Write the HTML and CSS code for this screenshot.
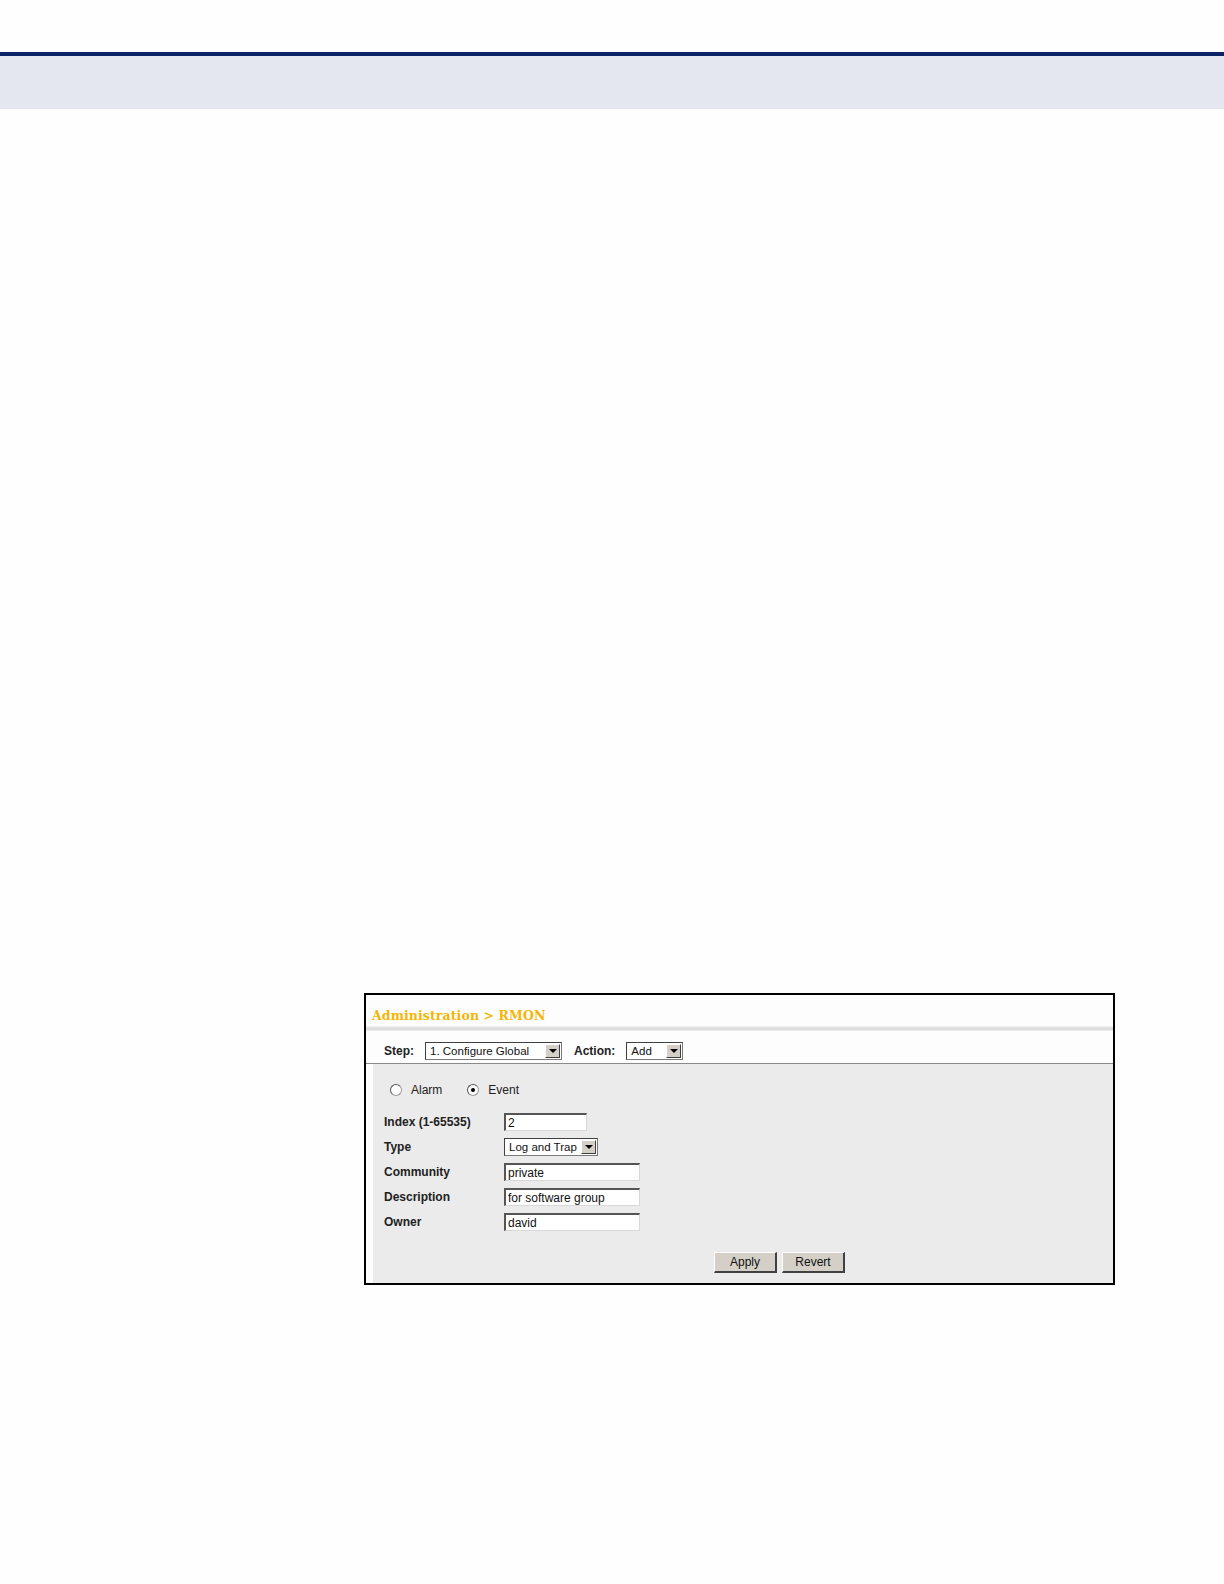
FILE: index.html
```html
<!DOCTYPE html>
<html>
<head>
<meta charset="utf-8">
<link rel="stylesheet" href="styles.css">
</head>
<body>
<div class="topbar"></div>
<div class="band"></div>
<div class="page">
  <div class="frame">
    <div class="title">Administration &gt; RMON</div>
    <div class="shade"></div>
    <div class="steprow">
      <span class="lbl">Step:</span>
      <div class="sel step-sel"><span class="val">1. Configure Global</span><span class="arrow"></span></div>
      <span class="lbl action">Action:</span>
      <div class="sel action-sel"><span class="val">Add</span><span class="arrow"></span></div>
    </div>
    <div class="content">
      <div class="radios">
        <span class="radio"></span><span class="rlabel">Alarm</span>
        <span class="radio on"></span><span class="rlabel">Event</span>
      </div>
      <div class="form">
        <div class="row"><span class="flabel">Index (1-65535)</span><div class="inp w83">2</div></div>
        <div class="row"><span class="flabel">Type</span><div class="sel type-sel"><span class="val">Log and Trap</span><span class="arrow"></span></div></div>
        <div class="row"><span class="flabel">Community</span><div class="inp w136">private</div></div>
        <div class="row"><span class="flabel">Description</span><div class="inp w136">for software group</div></div>
        <div class="row"><span class="flabel">Owner</span><div class="inp w136">david</div></div>
      </div>
      <div class="buttons">
        <div class="btn">Apply</div>
        <div class="btn">Revert</div>
      </div>
    </div>
  </div>
</div>
</body>
</html>
```
FILE: styles.css
```css
html, body {
  margin: 0;
  padding: 0;
  background: #fefefe;
  font-family: "Liberation Sans", Arial, sans-serif;
}
.topbar {
  margin-top: 52px;
  height: 4px;
  background: #0c2466;
}
.band {
  height: 53px;
  background: #e4e7ef;
}
.page {
  padding-top: 884px;
  padding-left: 364px;
}
.frame {
  width: 747px;
  height: 288px;
  border: 2px solid #000;
  background: #fdfdfd;
  display: flex;
  flex-direction: column;
}
.title {
  height: 31px;
  flex: none;
  padding-left: 6px;
  padding-top: 9px;
  box-sizing: border-box;
  display: flex;
  align-items: center;
  font-family: "DejaVu Serif", "Liberation Serif", serif;
  font-weight: bold;
  font-size: 12.5px;
  color: #f3b605;
  letter-spacing: 0.1px;
}
.shade {
  height: 5px;
  flex: none;
  background: linear-gradient(#f2f2f2, #d9d9d9 60%, #efefef);
}
.steprow {
  height: 33px;
  flex: none;
  box-sizing: border-box;
  padding-top: 7px;
  border-bottom: 1px solid #8a8a8a;
  display: flex;
  align-items: center;
  padding-left: 18px;
}
.lbl {
  font-weight: bold;
  font-size: 12px;
  color: #222;
  margin-right: 11px;
}
.lbl.action {
  margin-left: 12px;
}
.sel {
  height: 18px;
  box-sizing: border-box;
  border: 1px solid #7a7a7a;
  border-top-color: #404040;
  border-left-color: #404040;
  background: #fff;
  display: flex;
  align-items: center;
  justify-content: space-between;
  font-size: 11.5px;
  color: #111;
}
.sel .val {
  padding-left: 4px;
  white-space: nowrap;
}
.arrow {
  width: 15px;
  height: 14px;
  margin-right: 1px;
  background: #d4d0c8;
  box-sizing: border-box;
  border: 1px solid #fff;
  border-right-color: #404040;
  border-bottom-color: #404040;
  position: relative;
}
.arrow::after {
  content: "";
  position: absolute;
  left: 3px;
  top: 4px;
  border-left: 4px solid transparent;
  border-right: 4px solid transparent;
  border-top: 4px solid #000;
}
.step-sel { width: 137px; }
.action-sel { width: 57px; }
.type-sel { width: 94px; }
.content {
  flex: 1;
  margin-left: 7px;
  background: #ebebeb;
  padding-left: 11px;
  display: flex;
  flex-direction: column;
}
.radios {
  display: flex;
  align-items: center;
  height: 16px;
  margin-top: 18px;
  padding-left: 6px;
  font-size: 12px;
  color: #222;
}
.radio {
  width: 10px;
  height: 10px;
  border-radius: 50%;
  background: #fff;
  border: 1px solid #999;
  border-top-color: #555;
  border-left-color: #555;
  position: relative;
  margin-right: 9px;
}
.radio.on::after {
  content: "";
  position: absolute;
  left: 3px;
  top: 3px;
  width: 4px;
  height: 4px;
  border-radius: 50%;
  background: #000;
}
.rlabel {
  margin-right: 25px;
}
.form {
  margin-top: 15px;
  display: flex;
  flex-direction: column;
  gap: 7px;
}
.row {
  display: flex;
  align-items: center;
  height: 18px;
}
.flabel {
  width: 120px;
  font-weight: bold;
  font-size: 12px;
  color: #222;
}
.inp {
  height: 18px;
  box-sizing: border-box;
  background: #fff;
  border: 1px solid #d8d8d8;
  border-top: 2px solid #555;
  border-left: 2px solid #555;
  font-size: 12px;
  color: #111;
  padding-left: 2px;
  display: flex;
  align-items: center;
  white-space: nowrap;
}
.w83 { width: 83px; }
.w136 { width: 136px; }
.buttons {
  display: flex;
  gap: 5px;
  margin-top: 21px;
  padding-left: 330px;
}
.btn {
  width: 63px;
  height: 21px;
  box-sizing: border-box;
  background: #d4d0c8;
  border: 1px solid #fff;
  border-right: 2px solid #404040;
  border-bottom: 2px solid #404040;
  font-size: 12px;
  color: #111;
  display: flex;
  align-items: center;
  justify-content: center;
}
```
